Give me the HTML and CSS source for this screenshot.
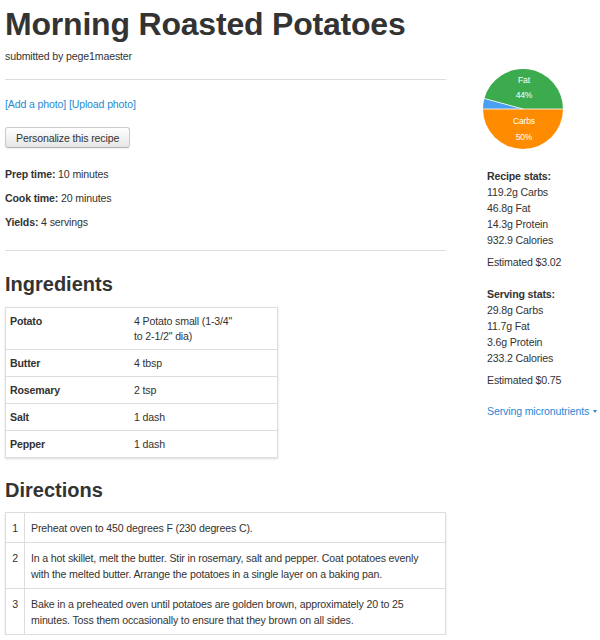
FILE: index.html
```html
<!DOCTYPE html>
<html lang="en">
<head>
    <meta charset="UTF-8">
    <title>Morning Roasted Potatoes</title>
    <link rel="stylesheet" href="styles.css">
</head>
<body>
    <div class="page">
        <div class="main">
            <h1 class="title">Morning Roasted Potatoes</h1>
            <div class="byline">submitted by pege1maester</div>
            <hr>
            <div class="photo-links"><a href="#">[Add a photo]</a> <a href="#">[Upload photo]</a></div>
            <button class="btn">Personalize this recipe</button>
            <p class="meta"><b>Prep time:</b> 10 minutes</p>
            <p class="meta"><b>Cook time:</b> 20 minutes</p>
            <p class="meta"><b>Yields:</b> 4 servings</p>
            <hr class="sep">

            <h2>Ingredients</h2>
            <table class="ingredients">
                <tr><th>Potato</th><td>4 Potato small (1-3/4"<br>to 2-1/2" dia)</td></tr>
                <tr><th>Butter</th><td>4 tbsp</td></tr>
                <tr><th>Rosemary</th><td>2 tsp</td></tr>
                <tr><th>Salt</th><td>1 dash</td></tr>
                <tr><th>Pepper</th><td>1 dash</td></tr>
            </table>

            <h2>Directions</h2>
            <table class="directions">
                <tr><td class="num">1</td><td>Preheat oven to 450 degrees F (230 degrees C).</td></tr>
                <tr><td class="num">2</td><td>In a hot skillet, melt the butter. Stir in rosemary, salt and pepper. Coat potatoes evenly with the melted butter. Arrange the potatoes in a single layer on a baking pan.</td></tr>
                <tr><td class="num">3</td><td>Bake in a preheated oven until potatoes are golden brown, approximately 20 to 25 minutes. Toss them occasionally to ensure that they brown on all sides.</td></tr>
            </table>
        </div>

        <div class="side">
            <svg class="pie" width="82" height="82" viewBox="-41 -41 82 82">
                <!-- carbs: bottom half -->
                <path d="M40 0 A40 40 0 0 1 -40 0 Z" fill="#ff8c00"/>
                <!-- protein: small slice on the left -->
                <path d="M0 0 L-40 0 A40 40 0 0 1 -38.6 -10.5 Z" fill="#4a9ff0"/>
                <!-- fat -->
                <path d="M0 0 L-38.6 -10.5 A40 40 0 0 1 40 0 Z" fill="#3bab4d"/>
                <line x1="-40" y1="0" x2="40" y2="0" stroke="#fff" stroke-width="0.8"/>
                <line x1="0" y1="0" x2="-38.6" y2="-10.5" stroke="#fff" stroke-width="0.8"/>
                <text x="1" y="-26" class="pie-label">Fat</text>
                <text x="1" y="-11" class="pie-label">44%</text>
                <text x="1" y="15" class="pie-label">Carbs</text>
                <text x="1" y="31" class="pie-label">50%</text>
            </svg>

            <div class="stats">
                <div class="stats-head">Recipe stats:</div>
                <div>119.2g Carbs</div>
                <div>46.8g Fat</div>
                <div>14.3g Protein</div>
                <div>932.9 Calories</div>
                <div class="cost">Estimated $3.02</div>
            </div>

            <div class="stats">
                <div class="stats-head">Serving stats:</div>
                <div>29.8g Carbs</div>
                <div>11.7g Fat</div>
                <div>3.6g Protein</div>
                <div>233.2 Calories</div>
                <div class="cost">Estimated $0.75</div>
            </div>

            <a href="#" class="micro">Serving micronutrients <span class="caret"></span></a>
        </div>
    </div>
</body>
</html>
```

FILE: styles.css
```css
body {
    margin: 0;
    padding: 0;
    font-family: "Liberation Sans", Arial, sans-serif;
    font-size: 10.6px;
    letter-spacing: -0.15px;
    color: #333;
    background: #fff;
}

a {
    color: #2a8ad4;
    text-decoration: none;
}

.page {
    display: flex;
    padding: 0 5px;
}

.main {
    width: 441px;
    flex-shrink: 0;
}

.side {
    margin-left: 41px;
    padding-top: 68px;
    white-space: nowrap;
}

.title {
    margin: 4px 0 0;
    font-size: 32px;
    line-height: 40px;
    font-weight: bold;
    letter-spacing: -0.2px;
    color: #333;
}

.byline {
    margin-top: 5px;
    line-height: 14px;
}

hr {
    margin: 16px 0 0;
    border: 0;
    border-top: 1px solid #ddd;
}

.photo-links {
    margin-top: 17px;
    line-height: 14px;
}

.btn {
    display: block;
    margin-top: 16px;
    padding: 0 10px;
    height: 21px;
    font-family: inherit;
    font-size: 10.6px;
    letter-spacing: -0.15px;
    color: #333;
    background: linear-gradient(#fff, #e6e6e6);
    border: 1px solid #ccc;
    border-bottom-color: #b3b3b3;
    border-radius: 3px;
    box-shadow: inset 0 1px 0 rgba(255, 255, 255, 0.2), 0 1px 2px rgba(0, 0, 0, 0.05);
}

.meta {
    margin: 0;
    margin-top: 10px;
    line-height: 14px;
}

.btn + .meta {
    margin-top: 19px;
}

.sep {
    margin-top: 21px;
}

h2 {
    margin: 21px 0 11px;
    font-size: 20px;
    line-height: 24px;
    letter-spacing: 0;
    color: #333;
}

table {
    border-collapse: collapse;
    border: 1px solid #ddd;
    box-shadow: 0 1px 2px rgba(0, 0, 0, 0.15);
}

td, th {
    border-top: 1px solid #ddd;
    text-align: left;
    vertical-align: top;
    line-height: 16px;
}

.ingredients {
    width: 273px;
}

.ingredients th,
.ingredients td {
    line-height: 15px;
    padding-top: 6px;
    padding-bottom: 5px;
}

.ingredients th {
    width: 107px;
    padding-left: 4px;
    padding-right: 5px;
    font-weight: bold;
}

.ingredients td {
    padding-left: 12px;
    padding-right: 5px;
}

.ingredients + h2 {
    margin-top: 20px;
    margin-bottom: 10px;
}

.directions {
    width: 441px;
    border-radius: 3px;
}

.directions td {
    padding: 7px 6px 6px 6px;
}

.directions .num {
    width: 6px;
    border-right: 1px solid #ddd;
    text-align: center;
}

.pie {
    display: block;
    margin-left: -5px;
}

.pie-label {
    fill: #fff;
    font-size: 8.5px;
    font-family: "Liberation Sans", Arial, sans-serif;
    text-anchor: middle;
}

.stats {
    margin-top: 18px;
    line-height: 16px;
}

.stats + .stats {
    margin-top: 16px;
}

.stats-head {
    font-weight: bold;
}

.cost {
    margin-top: 6px;
}

.micro {
    display: block;
    margin-top: 16px;
    line-height: 14px;
}

.caret {
    display: inline-block;
    margin-left: 1px;
    vertical-align: 2px;
    border-left: 2px solid transparent;
    border-right: 2px solid transparent;
    border-top: 3px solid #2a8ad4;
}
```
